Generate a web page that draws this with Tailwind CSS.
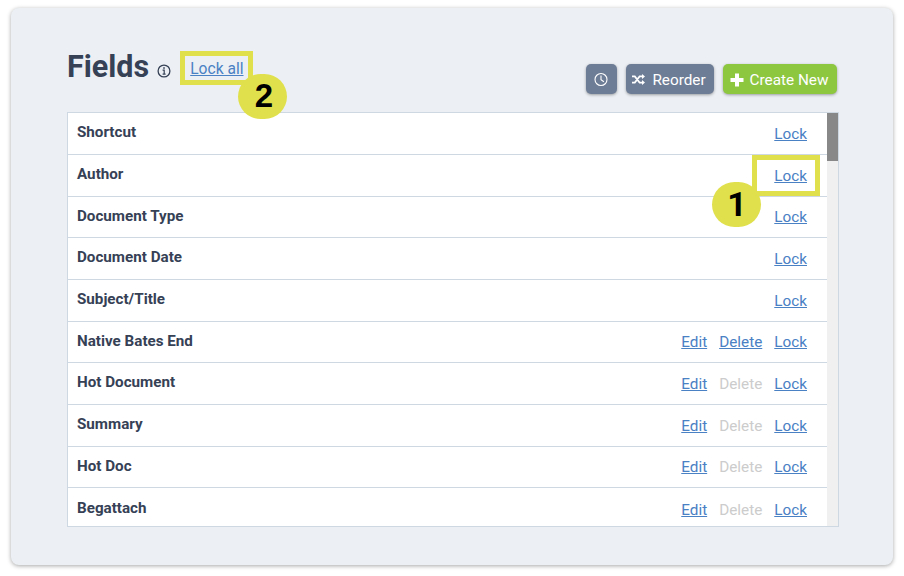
<!DOCTYPE html>
<html lang="en">

<head>
    <meta charset="UTF-8" />
    <title>Fields</title>
    <script src="https://cdn.jsdelivr.net/npm/@tailwindcss/browser@4"></script>
</head>

<body class="bg-white w-[904px] h-[576px] overflow-hidden relative font-['Roboto',sans-serif]">

    <div class="ml-[11px] mt-2 w-[882px] h-[557px] bg-[#ecf0f4] rounded-lg shadow-[0_1px_4px_rgba(0,0,0,0.35)] px-14 pt-[38px]">

        <!-- header -->
        <div class="flex justify-between h-[66px]">
            <div class="flex items-start">
                <h2 class="text-[30.5px] leading-[42px] font-bold text-[#364156]">Fields</h2>
                <svg class="ml-[8px] mt-[18px]" width="14" height="14" viewBox="0 0 14 14" fill="none" stroke="#364156">
                    <circle cx="7" cy="7" r="5.9" stroke-width="1.3" />
                    <path d="M5.6 6.2H7.2V10M5.6 10.1H8.6" stroke-width="1.2" />
                    <path d="M6.2 3.2H7.8V4.8H6.2Z" fill="#364156" stroke="none" />
                </svg>
                <a href="#" class="ml-[19px] mt-[13px] text-[15.6px] leading-[20px] text-[#4a80c4] underline">Lock all</a>
            </div>
            <div class="flex gap-[9px] mt-[18px] text-[15.3px] leading-[20px] text-white">
                <button class="w-[31px] h-[30px] rounded-[5px] bg-[#6e7d96] shadow-[0_1px_3px_rgba(0,0,0,0.35)] flex items-center justify-center">
                    <svg width="15" height="15" viewBox="0 0 15 15" fill="none" stroke="#fff" stroke-width="1.1">
                        <circle cx="7" cy="7.5" r="6" />
                        <path d="M7 3.6V7.8L9.9 9.7" />
                    </svg>
                </button>
                <button class="w-[88px] h-[30px] pt-[1px] pr-[2px] rounded-[5px] bg-[#6e7d96] shadow-[0_1px_3px_rgba(0,0,0,0.35)] flex items-center justify-center gap-[7px]">
                    <svg width="13" height="11" viewBox="0 0 13 11" fill="none" stroke="#fff" stroke-width="1.7">
                        <path d="M0 2.4H2.8L7.6 8.6H10.5M0 8.6H2.8L7.6 2.4H10.5" />
                        <path d="M10 0V5L13 2.5ZM10 6V11L13 8.5Z" fill="#fff" stroke="none" />
                    </svg>
                    Reorder
                </button>
                <button class="w-[114px] h-[30px] pt-[1px] pr-[2px] rounded-[5px] bg-[#8dc63f] shadow-[0_1px_3px_rgba(0,0,0,0.35)] flex items-center justify-center gap-[6px]">
                    <svg width="14" height="14" viewBox="0 0 14 14" fill="#fff">
                        <path d="M5 0.5H9V5H13.5V9H9V13.5H5V9H0.5V5H5Z" />
                    </svg>
                    Create New
                </button>
            </div>
        </div>

        <!-- table -->
        <div class="relative w-[772px] h-[415px] border border-[#ced8e3] bg-white overflow-hidden">
            <div class="w-[759px] pt-[0.3px] flex flex-col text-[15.3px] leading-[20px]">
                <div class="h-[41.7px] shrink-0 flex justify-between items-center pl-[9px] pr-5 border-b border-[#ced8e3]">
                    <span class="font-bold text-[15.2px] text-[#364156] -mt-[2.6px]">Shortcut</span>
                    <span class="flex gap-3 pt-[0.4px]"><a href="#" class="text-[#4a80c4] underline">Lock</a></span>
                </div>
                <div class="h-[41.7px] shrink-0 flex justify-between items-center pl-[9px] pr-5 border-b border-[#ced8e3]">
                    <span class="font-bold text-[15.2px] text-[#364156] -mt-[2.6px]">Author</span>
                    <span class="flex gap-3 pt-[0.4px]"><a href="#" class="text-[#4a80c4] underline">Lock</a></span>
                </div>
                <div class="h-[41.7px] shrink-0 flex justify-between items-center pl-[9px] pr-5 border-b border-[#ced8e3]">
                    <span class="font-bold text-[15.2px] text-[#364156] -mt-[2.6px]">Document Type</span>
                    <span class="flex gap-3 pt-[0.4px]"><a href="#" class="text-[#4a80c4] underline">Lock</a></span>
                </div>
                <div class="h-[41.7px] shrink-0 flex justify-between items-center pl-[9px] pr-5 border-b border-[#ced8e3]">
                    <span class="font-bold text-[15.2px] text-[#364156] -mt-[2.6px]">Document Date</span>
                    <span class="flex gap-3 pt-[0.4px]"><a href="#" class="text-[#4a80c4] underline">Lock</a></span>
                </div>
                <div class="h-[41.7px] shrink-0 flex justify-between items-center pl-[9px] pr-5 border-b border-[#ced8e3]">
                    <span class="font-bold text-[15.2px] text-[#364156] -mt-[2.6px]">Subject/Title</span>
                    <span class="flex gap-3 pt-[0.4px]"><a href="#" class="text-[#4a80c4] underline">Lock</a></span>
                </div>
                <div class="h-[41.7px] shrink-0 flex justify-between items-center pl-[9px] pr-5 border-b border-[#ced8e3]">
                    <span class="font-bold text-[15.2px] text-[#364156] -mt-[2.6px]">Native Bates End</span>
                    <span class="flex gap-3 pt-[0.4px]"><a href="#" class="text-[#4a80c4] underline">Edit</a><a href="#" class="text-[#4a80c4] underline">Delete</a><a href="#" class="text-[#4a80c4] underline">Lock</a></span>
                </div>
                <div class="h-[41.7px] shrink-0 flex justify-between items-center pl-[9px] pr-5 border-b border-[#ced8e3]">
                    <span class="font-bold text-[15.2px] text-[#364156] -mt-[2.6px]">Hot Document</span>
                    <span class="flex gap-3 pt-[0.4px]"><a href="#" class="text-[#4a80c4] underline">Edit</a><span class="text-[#cccccc]">Delete</span><a href="#" class="text-[#4a80c4] underline">Lock</a></span>
                </div>
                <div class="h-[41.7px] shrink-0 flex justify-between items-center pl-[9px] pr-5 border-b border-[#ced8e3]">
                    <span class="font-bold text-[15.2px] text-[#364156] -mt-[2.6px]">Summary</span>
                    <span class="flex gap-3 pt-[0.4px]"><a href="#" class="text-[#4a80c4] underline">Edit</a><span class="text-[#cccccc]">Delete</span><a href="#" class="text-[#4a80c4] underline">Lock</a></span>
                </div>
                <div class="h-[41.7px] shrink-0 flex justify-between items-center pl-[9px] pr-5 border-b border-[#ced8e3]">
                    <span class="font-bold text-[15.2px] text-[#364156] -mt-[2.6px]">Hot Doc</span>
                    <span class="flex gap-3 pt-[0.4px]"><a href="#" class="text-[#4a80c4] underline">Edit</a><span class="text-[#cccccc]">Delete</span><a href="#" class="text-[#4a80c4] underline">Lock</a></span>
                </div>
                <div class="h-[41.7px] shrink-0 flex justify-between items-center pl-[9px] pr-5">
                    <span class="font-bold text-[15.2px] text-[#364156] -mt-[2.6px]">Begattach</span>
                    <span class="flex gap-3 pt-[0.4px]"><a href="#" class="text-[#4a80c4] underline">Edit</a><span class="text-[#cccccc]">Delete</span><a href="#" class="text-[#4a80c4] underline">Lock</a></span>
                </div>
            </div>
            <!-- scrollbar -->
            <div class="absolute right-0 top-0 bottom-0 w-[11px] bg-[#f0f0f0]">
                <div class="h-[48px] bg-[#888888]"></div>
            </div>
        </div>
    </div>

    <!-- annotation overlays -->
    <div class="absolute left-[180px] top-[51px] w-[73px] h-[34px] border-[5px] border-[#e0e04d]"></div>
    <div class="absolute left-[238px] top-[74px] w-[49px] h-[45px] rounded-full bg-[#e0e04d] flex items-center justify-center pl-[3px] pb-[2px] text-[33px] font-bold font-['Liberation_Sans',sans-serif] text-black">2</div>
    <div class="absolute left-[752px] top-[155px] w-[68px] h-[41px] border-[5px] border-[#e0e04d]"></div>
    <div class="absolute left-[712px] top-[182px] w-[49px] h-[45px] rounded-full bg-[#e0e04d] flex items-center justify-center pl-[1px] text-[34px] font-bold text-black">1</div>

</body>

</html>
